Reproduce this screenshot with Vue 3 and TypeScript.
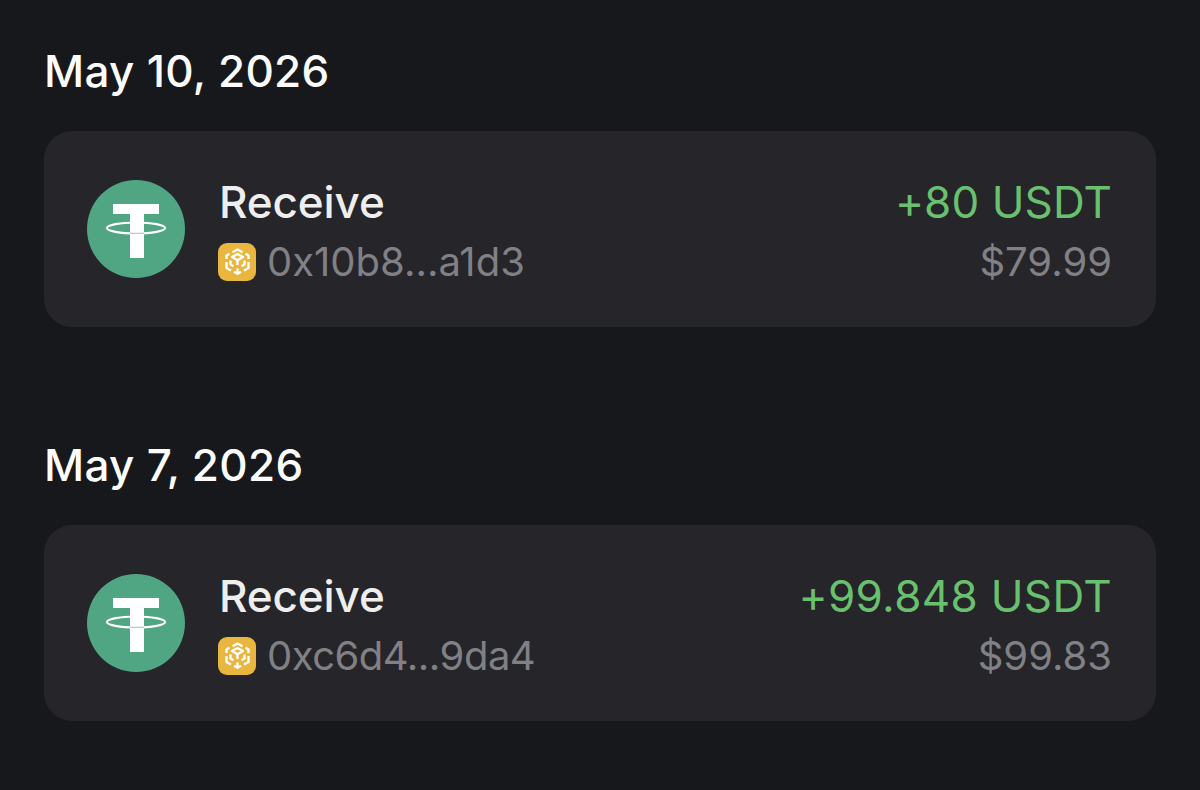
<script setup lang="ts">
interface Tx {
  date: string;
  address: string;
  amount: string;
  fiat: string;
  addressTracking?: string;
  amountTracking?: string;
}

const txs: Tx[] = [
  { date: "May 10, 2026", address: "0x10b8...a1d3", amount: "+80 USDT", fiat: "$79.99" },
  {
    date: "May 7, 2026",
    address: "0xc6d4...9da4",
    amount: "+99.848 USDT",
    fiat: "$99.83",
    addressTracking: "-0.5px",
    amountTracking: "0.35px"
  }
];
</script>

<template>
  <div class="page">
    <section v-for="tx in txs" :key="tx.date" class="group">
      <h2 class="date">{{ tx.date }}</h2>
      <div class="card">
        <svg class="token" viewBox="0 0 98 98" aria-hidden="true">
          <circle cx="49" cy="49" r="49" fill="#50a583" />
          <ellipse cx="49" cy="48" rx="29" ry="5.500" fill="none" stroke="#fff" stroke-width="2.200" />
          <path d="M26 24h46v10H57v44H43V34H26z" fill="#fff" />
          <path d="M43 53.200q6 .3 14 0" fill="none" stroke="#8fc7b0" stroke-width="1" />
        </svg>
        <div class="info">
          <div class="title">Receive</div>
          <div class="addr">
            <svg class="chain" viewBox="0 0 38 38" aria-hidden="true">
              <rect width="38" height="38" rx="9" fill="#e9b63f" />
              <g fill="none" stroke="#fff" stroke-width="2.400" stroke-linejoin="round">
                <path d="M14.500 9.200 19.500 6.500l5 2.700" />
                <path d="M8.500 16v-3.500l3-1.700" />
                <path d="M30.500 16v-3.500l-3-1.700" />
                <path d="M14 14l5.500-3 5.500 3-5.500 3.200z" />
                <path d="M19.500 17.200V22" />
                <path d="M8.500 19v6l4.500 2.500" />
                <path d="M30.500 19v6L26 27.500" />
                <path d="M12.500 17.500v4l3 1.700" />
                <path d="M26.500 17.500v4l-3 1.700" />
                <path d="M16 28.800l3.500 2 3.500-2" />
                <path d="M19.500 25.500v5" />
              </g>
            </svg>
            <span :style="{ letterSpacing: tx.addressTracking }">{{ tx.address }}</span>
          </div>
        </div>
        <div class="values">
          <div class="amount" :style="{ letterSpacing: tx.amountTracking }">{{ tx.amount }}</div>
          <div class="fiat">{{ tx.fiat }}</div>
        </div>
      </div>
    </section>
  </div>
</template>

<style>
html,
body {
  background: #17181c;
}
</style>

<style scoped>
.page {
  width: 1200px;
  height: 790px;
  box-sizing: border-box;
  padding: 42px 44px 0;
  background: #17181c;
  font-family: Inter, "Liberation Sans", sans-serif;
  display: flex;
  flex-direction: column;
  gap: 109px;
  overflow: hidden;
}

.date {
  margin: 0 0 30px;
  font-size: 44px;
  line-height: 59px;
  font-weight: 450;
  letter-spacing: 0.3px;
  color: #fcfcfc;
}

.card {
  height: 196px;
  box-sizing: border-box;
  padding: 0 44px 0 43px;
  border-radius: 28px;
  background: #25252a;
  display: flex;
  align-items: center;
}

.token {
  width: 98px;
  height: 98px;
  flex: none;
}

.info {
  margin-left: 34px;
  padding-top: 6px;
  flex: 1;
}

.title {
  font-size: 44px;
  line-height: 60px;
  font-weight: 450;
  letter-spacing: -0.1px;
  color: #eeeeef;
}

.addr {
  display: flex;
  align-items: center;
  gap: 11px;
  font-size: 40px;
  line-height: 60px;
  color: #808085;
}

.chain {
  width: 38px;
  height: 38px;
  flex: none;
  margin-left: -1px;
}

.values {
  padding-top: 6px;
  text-align: right;
}

.amount {
  font-size: 44px;
  line-height: 60px;
  letter-spacing: 0.1px;
  color: #69c06e;
}

.fiat {
  font-size: 40px;
  line-height: 60px;
  color: #808085;
}
</style>
